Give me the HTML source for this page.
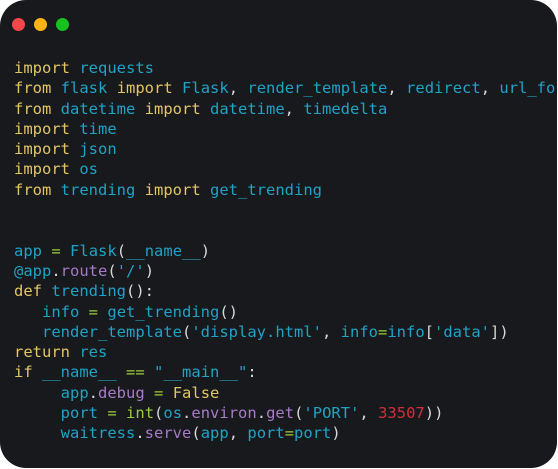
<!DOCTYPE html>
<html><head><style>
html,body{margin:0;padding:0;background:#fff;width:558px;height:469px;overflow:hidden}
.win{position:absolute;left:0;top:0;width:557px;height:468px;background:#17191c;border-radius:26px;overflow:hidden}
.d{position:absolute;top:18px;width:13px;height:13px;border-radius:50%}
pre{position:absolute;left:14px;top:58px;margin:0;font-family:"DejaVu Sans Mono","Liberation Mono",monospace;font-size:15.5px;line-height:20.3px;color:#d8d8d8;white-space:pre}
.k{color:#e3c664}.c{color:#1fa3c6}.g{color:#9ccc3c}.p{color:#a77bc7}.r{color:#d0303c}
</style></head><body><div class="win">
<div class="d" style="left:12px;background:#f5474a"></div>
<div class="d" style="left:34px;background:#fbb311"></div>
<div class="d" style="left:56px;background:#17c21f"></div>
<pre><span class="k">import</span> <span class="c">requests</span>
<span class="k">from</span> <span class="c">flask</span> <span class="k">import</span> <span class="c">Flask</span>, <span class="c">render_template</span>, <span class="c">redirect</span>, <span class="c">url_for</span>
<span class="k">from</span> <span class="c">datetime</span> <span class="k">import</span> <span class="c">datetime</span>, <span class="c">timedelta</span>
<span class="k">import</span> <span class="c">time</span>
<span class="k">import</span> <span class="c">json</span>
<span class="k">import</span> <span class="c">os</span>
<span class="k">from</span> <span class="c">trending</span> <span class="k">import</span> <span class="c">get_trending</span>


<span class="c">app</span> <span class="g">=</span> <span class="c">Flask</span>(<span class="c">__name__</span>)
<span class="c">@app</span>.<span class="p">route</span>(<span class="c">'/'</span>)
<span class="k">def</span> <span class="c">trending</span>():
   <span class="c">info</span> <span class="g">=</span> <span class="c">get_trending</span>()
   <span class="c">render_template</span>(<span class="c">'display.html'</span>, <span class="c">info</span><span class="g">=</span><span class="c">info</span>[<span class="c">'data'</span>])
<span class="k">return</span> <span class="c">res</span>
<span class="k">if</span> <span class="c">__name__</span> <span class="g">==</span> <span class="c">"__main__"</span>:
     <span class="c">app</span>.<span class="p">debug</span> <span class="g">=</span> <span class="k">False</span>
     <span class="c">port</span> <span class="g">=</span> <span class="g">int</span>(<span class="c">os</span>.<span class="p">environ</span>.<span class="p">get</span>(<span class="c">'PORT'</span>, <span class="r">33507</span>))
     <span class="c">waitress</span>.<span class="p">serve</span>(<span class="c">app</span>, <span class="c">port</span><span class="g">=</span><span class="c">port</span>)</pre>
</div></body></html>
